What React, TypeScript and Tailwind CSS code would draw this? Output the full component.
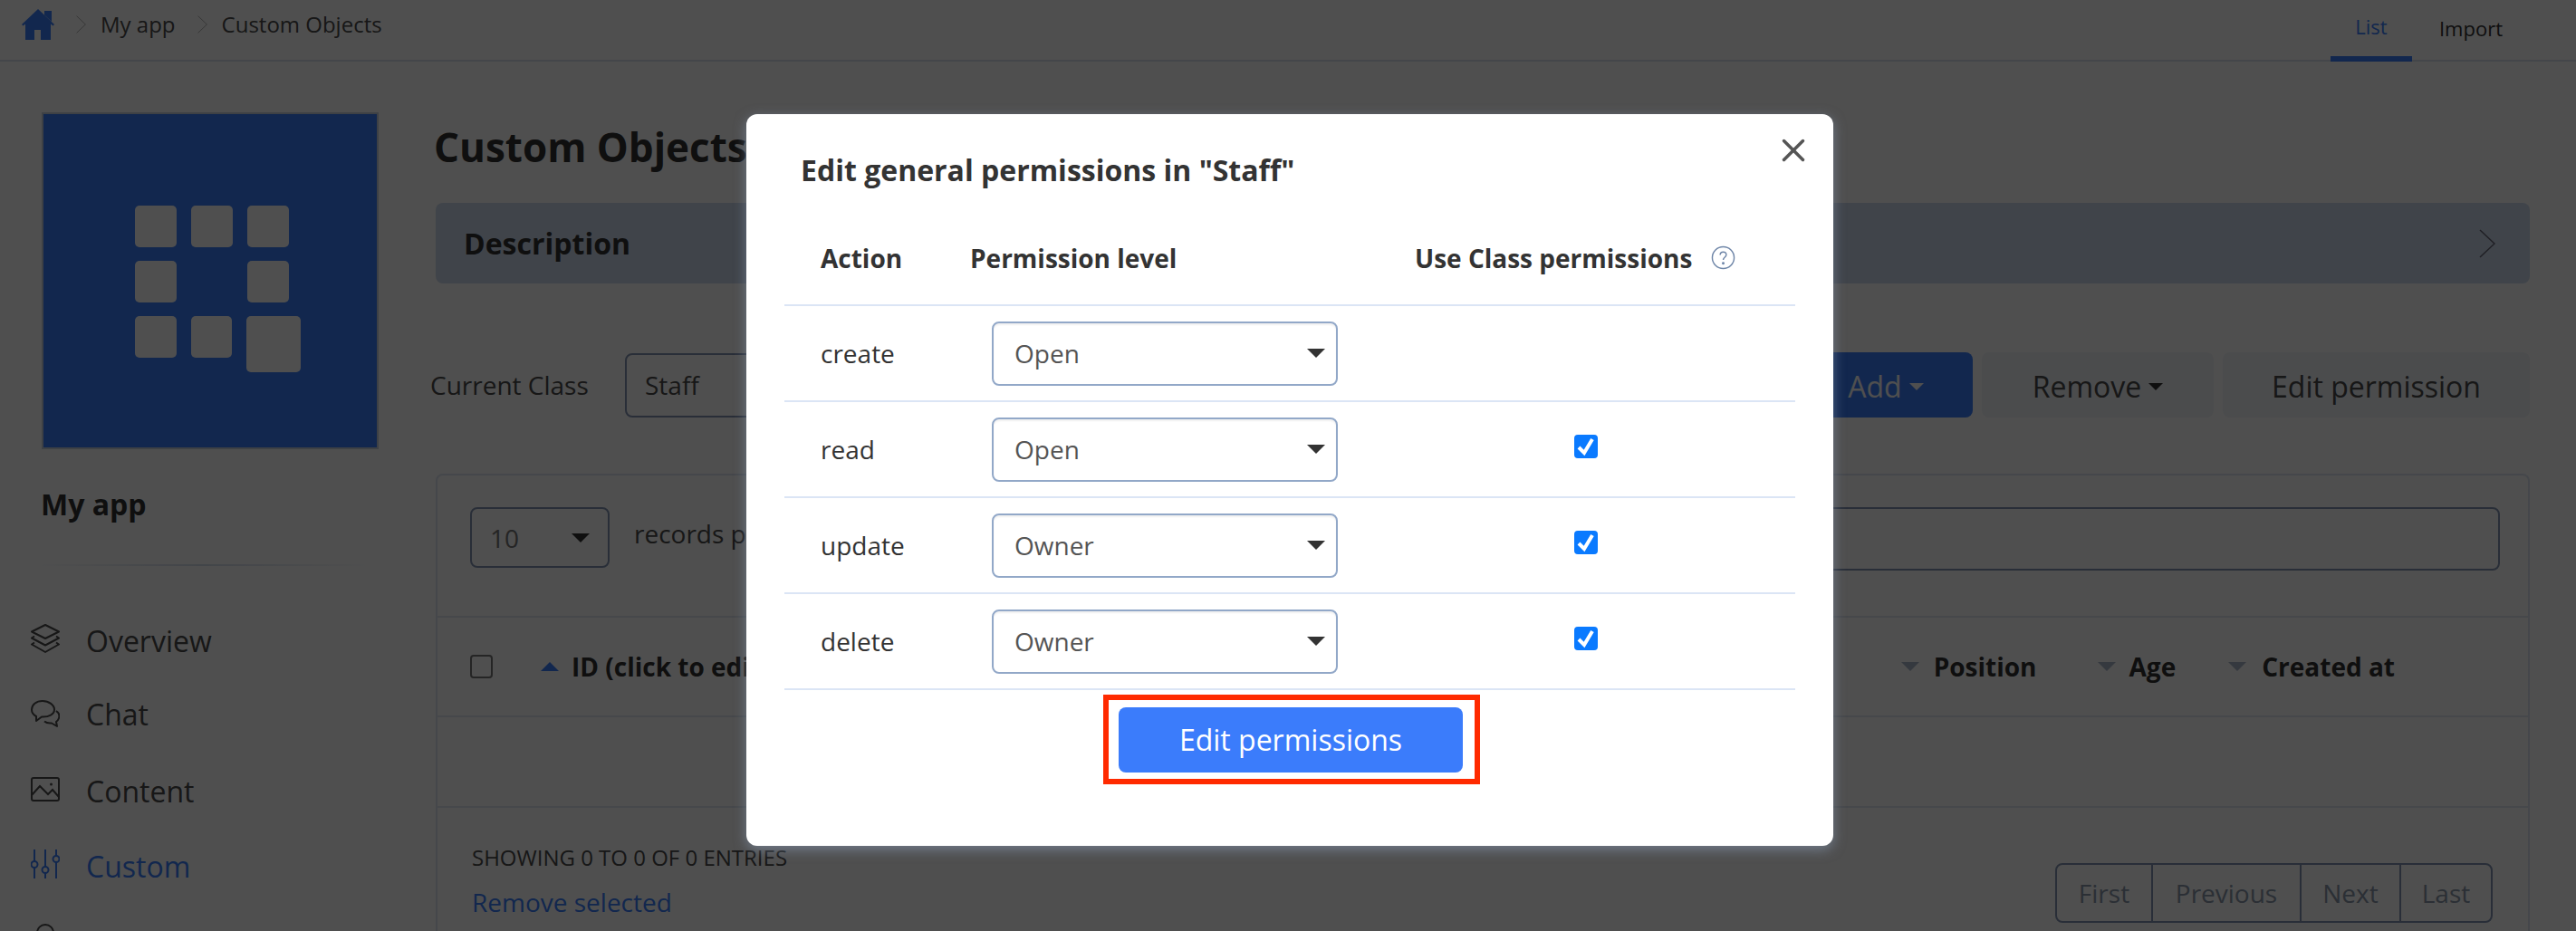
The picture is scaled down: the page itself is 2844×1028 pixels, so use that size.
import { X } from 'lucide-react';

const font = "font-['Open_Sans',sans-serif]";

const Triangle = ({ className, up }: { className: string; up?: boolean }) => (
  <svg viewBox="0 0 20 10" className={className} fill="currentColor">
    <path d={up ? 'M10 0 20 10H0Z' : 'M0 0H20L10 10Z'} />
  </svg>
);

const Chevron = ({ className }: { className: string }) => (
  <svg viewBox="0 0 18 32" preserveAspectRatio="none" className={className} fill="none" stroke="currentColor" strokeWidth="1.5">
    <path d="M1 1 17 16 1 31" />
  </svg>
);

const HomeIcon = () => (
  <svg viewBox="0 0 36 34" className="w-9 h-[34px] text-[#3a7ffb]" fill="currentColor">
    <path d="M18 0 36 17l-1.500 1.500L32 16.500V34H21V23h-7v11H4V16.500L1.500 18.500 0 17 18 0Z" />
    <path d="M25 2h8v12l-8-7.500Z" />
  </svg>
);

const OverviewIcon = () => (
  <svg viewBox="0 0 32 32" className="w-8 h-8 -mt-[6px]" fill="none" stroke="currentColor" strokeWidth="2" strokeLinejoin="round">
    <path d="M16 1 31 8.500 16 16 1 8.500Z" />
    <path d="M4 13.500 1 15.500 16 23.500 31 15.500 28 13.500" />
    <path d="M4 20.500 1 22.500 16 31 31 22.500 28 20.500" />
  </svg>
);

const ChatIcon = () => (
  <svg viewBox="0 0 32 32" className="w-8 h-8" fill="none" stroke="currentColor" strokeWidth="2" strokeLinejoin="round">
    <path d="M13 1C6 1 1 5 1 10.500c0 3.500 2 6 5 7.500v5l6-4.500c8 .5 14-3 14-8S20 1 13 1Z" />
    <path d="M28 12c3 2 4 5 3 8-.5 1.500-1.500 3-3 4l1 5-6-3.500c-3 .3-6-.2-8-2" />
  </svg>
);

const ImageIcon = () => (
  <svg viewBox="0 0 32 32" className="w-8 h-8" fill="none" stroke="currentColor" strokeWidth="2">
    <rect x="1" y="1" width="30" height="25" rx="2" />
    <path d="M1 20 10 10 19 19 24 14 31 22" />
    <circle cx="22.500" cy="8" r="1.500" fill="currentColor" stroke="none" />
  </svg>
);

const SlidersIcon = () => (
  <svg viewBox="0 0 32 32" className="w-8 h-8 -mt-[6px]" fill="none" stroke="currentColor" strokeWidth="2">
    <path d="M4 0V13M4 20V32M16 0V19M16 26V32M28 0V7M28 14V32" />
    <circle cx="4" cy="16.500" r="3.500" />
    <circle cx="16" cy="22.500" r="3.500" />
    <circle cx="28" cy="10.500" r="3.500" />
  </svg>
);

const nav = [
  { label: 'Overview', icon: <OverviewIcon />, className: 'text-[#4a4a4a]' },
  { label: 'Chat', icon: <ChatIcon />, className: 'text-[#4a4a4a] -mt-[2px] mb-[2px]' },
  { label: 'Content', icon: <ImageIcon />, className: 'text-[#4a4a4a]' },
  { label: 'Custom', icon: <SlidersIcon />, className: 'text-[#3a7ffb]' },
];

const perms = [
  { action: 'create', level: 'Open', useClass: false },
  { action: 'read', level: 'Open', useClass: true },
  { action: 'update', level: 'Owner', useClass: true },
  { action: 'delete', level: 'Owner', useClass: true },
];

const pages = [
  { label: 'First', width: 'w-[104px]' },
  { label: 'Previous', width: 'w-[164px]' },
  { label: 'Next', width: 'w-[110px]' },
  { label: 'Last', width: 'w-[101px]' },
];

const Tile = ({ big }: { big?: boolean }) => (
  <div className={`rounded-[5px] bg-white ${big ? 'w-[60px] h-[62px]' : 'w-[46px] h-[46px]'}`} />
);

const Sidebar = () => (
  <aside className="w-[481px] shrink-0 pt-[56px] pl-[46px]">
    <div className="w-[372px] h-[372px] border-2 border-[#c7d0de] bg-[#3a7ffb] flex items-center justify-center">
      <div className="w-[183px] flex flex-col gap-[15px] mt-[18px] ml-[17px]">
        <div className="flex gap-4"><Tile /><Tile /><Tile /></div>
        <div className="flex gap-4"><Tile /><div className="w-[46px]" /><Tile /></div>
        <div className="flex gap-4 h-[62px] items-start"><Tile /><Tile /><Tile big /></div>
      </div>
    </div>
    <div className="mt-[39px] text-[32px] leading-[44px] font-bold text-[#333] -ml-[1px]">My app</div>
    <div className="mt-[44px] -ml-[10px] h-[2px] w-[376px] bg-gradient-to-r from-white via-[#d5deeb] to-white" />
    <nav className="mt-[61px] -ml-[12px] flex flex-col gap-[39px]">
      {nav.map((item) => (
        <div key={item.label} className={`flex items-center gap-[29px] h-[44px] text-[32px] ${item.className}`}>
          {item.icon}
          <span>{item.label}</span>
        </div>
      ))}
      <div className="flex items-center gap-[29px] h-[44px] text-[#4a4a4a]">
        <svg viewBox="0 0 32 32" className="w-8 h-8 -mt-[8px]" fill="none" stroke="currentColor" strokeWidth="2">
          <circle cx="16" cy="10" r="9" />
        </svg>
      </div>
    </nav>
  </aside>
);

const MainContent = () => (
  <main className="w-[2312px] shrink-0 pt-[64px]">
    <h1 className="-ml-[2px] text-[44px] leading-[60px] font-bold text-[#333]">Custom Objects</h1>
    <div className="mt-[32px] h-[89px] rounded-lg bg-[#cedbee] flex items-center justify-between pl-[31px] pr-[38px]">
      <span className="text-[32px] font-bold text-[#333]">Description</span>
      <Chevron className="w-[18px] h-8 text-[#667]" />
    </div>
    <div className="mt-[76px] flex items-center h-[72px]">
      <span className="-ml-[6px] w-[215px] text-[28px] text-[#4a4a4a]">Current Class</span>
      <div className="w-[301px] h-[71px] rounded-lg border-2 border-[#8596b4] flex items-center pl-[20px] text-[28px] text-[#4a4a4a]">Staff</div>
      <div className="ml-auto w-[200px] h-[72px] rounded-lg bg-[#3a7ffb] flex items-center justify-center gap-2 text-[32px] text-white pl-[8px] pt-[3px]">
        Add <Triangle className="w-4 h-2 text-white" />
      </div>
      <div className="ml-[10px] w-[256px] h-[72px] rounded-lg bg-[#f1f4f9] flex items-center justify-center gap-2 text-[32px] text-[#4a4a4a] pt-[3px]">
        Remove <Triangle className="w-4 h-2 text-[#333]" />
      </div>
      <div className="ml-[10px] w-[339px] h-[72px] rounded-lg bg-[#f1f4f9] flex items-center justify-center text-[32px] text-[#4a4a4a] pt-[3px]">Edit permission</div>
    </div>
    <section className="mt-[62px] rounded-t-lg border-2 border-b-0 border-[#dde5f0] h-[600px]">
      <div className="h-[157px] border-b-2 border-[#e2e8f2] flex items-start pt-[35px] pl-[36px] pr-[31px]">
        <div className="w-[154px] h-[67px] rounded-lg border-2 border-[#8596b4] flex items-center justify-between pl-[20px] pr-[20px] text-[28px] text-[#777]">
          10 <Triangle className="w-[20px] h-[10px] text-[#333]" />
        </div>
        {/* cut at the modal edge, the rest of the label sits behind the dialog */}
        <span className="ml-[27px] w-[124px] overflow-hidden whitespace-nowrap text-[28px] text-[#4a4a4a] leading-[58px]">records per page</span>
        <div className="ml-auto w-[1500px] h-[70px] rounded-lg border-2 border-[#8596b4]" />
      </div>
      <div className="h-[110px] border-b-2 border-[#e2e8f2] flex items-center text-[28px] font-bold text-[#333] pl-[36px]">
        <div className="w-[25px] h-[26px] rounded-[4px] border-2 border-[#777]" />
        <Triangle up className="ml-[53px] w-[20px] h-[10px] text-[#3a7ffb]" />
        <span className="ml-[14px] whitespace-nowrap">ID (click to edit)</span>
        <Triangle className="ml-auto w-[20px] h-[10px] text-[#aab8cc]" />
        <span className="ml-[16px]">Position</span>
        <Triangle className="ml-[67px] w-[20px] h-[10px] text-[#aab8cc]" />
        <span className="ml-[15px]">Age</span>
        <Triangle className="ml-[58px] w-[20px] h-[10px] text-[#aab8cc]" />
        <span className="ml-[17px] mr-[147px]">Created at</span>
      </div>
      <div className="h-[100px] border-b-2 border-[#e2e8f2]" />
      <div className="flex items-start justify-between pl-[38px] pr-[39px]">
        <div className="pt-[39px]">
          <div className="text-[24px] leading-[32px] text-[#4a4a4a]">SHOWING 0 TO 0 OF 0 ENTRIES</div>
          <div className="mt-[14px] text-[28px] leading-[38px] text-[#3a7ffb]">Remove selected</div>
        </div>
        <div className="mt-[61px] h-[66px] rounded-lg border-2 border-[#8596b4] flex text-[28px] text-[#8a97aa]">
          {pages.map((p, i) => (
            <div key={p.label} className={`flex items-center justify-center ${p.width} ${i > 0 ? 'border-l-2 border-[#8596b4]' : ''}`}>{p.label}</div>
          ))}
        </div>
      </div>
    </section>
  </main>
);

const PermissionsModal = () => (
  <div className="absolute left-[824px] top-[126px] w-[1200px] h-[808px] rounded-xl bg-white shadow-[0_4px_14px_rgba(150,170,200,0.5)] px-[42px] text-[#333]">
    <X className="absolute right-[23px] top-[19px] w-[42px] h-[42px] text-[#555]" strokeWidth={2} />
    <h2 className="mt-[40px] pl-[18px] text-[32px] leading-[44px] font-bold">Edit general permissions in "Staff"</h2>
    <div className="mt-[23px] h-[105px] flex items-center border-b-2 border-[#dbe5f5] text-[28px] font-bold">
      <span className="pl-[40px] w-[205px]">Action</span>
      <span className="w-[491px]">Permission level</span>
      <span>Use Class permissions</span>
      <svg viewBox="0 0 28 28" className="ml-[21px] w-[27px] h-[27px] text-[#6f86a8]" fill="none" stroke="currentColor" strokeWidth="1.5">
        <circle cx="14" cy="14" r="12.500" />
        <path d="M10.500 11c0-2.200 1.500-3.500 3.500-3.500s3.500 1.300 3.500 3.200c0 2.800-3.500 2.800-3.500 6" />
        <circle cx="14" cy="20.500" r=".8" fill="currentColor" />
      </svg>
    </div>
    {perms.map((p) => (
      <div key={p.action} className="h-[106px] flex items-center border-b-2 border-[#dbe5f5] text-[28px]">
        <span className="pl-[40px] w-[229px]">{p.action}</span>
        <div className="w-[382px] h-[71px] rounded-lg border-2 border-[#92a8c8] flex items-center justify-between pl-[23px] pr-[12px] text-[#555] shadow-[inset_0_2px_2px_rgba(0,0,0,0.06)]">
          {p.level}
          <Triangle className="w-[20px] h-[10px] text-[#333]" />
        </div>
        {p.useClass && (
          <div className="ml-[261px] -mt-[6px] w-[26px] h-[26px] rounded-[4px] bg-[#0a7aff] flex items-center justify-center">
            <svg viewBox="0 0 26 26" className="w-[26px] h-[26px]" fill="none" stroke="white" strokeWidth="4">
              <path d="M5 14 11 20 20 5" />
            </svg>
          </div>
        )}
      </div>
    ))}
    <div className="mt-[5px] flex justify-center">
      <div className="ml-[4px] w-[416px] h-[99px] border-[6px] border-[#ff2a00] flex items-center justify-center">
        <div className="mr-[2px] w-[380px] h-[72px] rounded-lg bg-[#3b7cfb] flex items-center justify-center text-[32px] text-white">Edit permissions</div>
      </div>
    </div>
  </div>
);

export default function App() {
  return (
    <div className={`${font} relative w-[2844px] h-[1028px] overflow-hidden bg-white`}>
      {/* Top bar */}
      <header className="h-[68px] border-b-2 border-[#dbe3ef] flex items-center pl-[24px] pr-[60px] text-[#4a4a4a]">
        <div className="flex items-center pb-[12px] text-[24px]">
          <HomeIcon />
          <Chevron className="ml-[24px] w-[11px] h-[20px] text-[#aaa]" />
          <span className="ml-[16px]">My app</span>
          <Chevron className="ml-[24px] w-[11px] h-[20px] text-[#aaa]" />
          <span className="ml-[16px]">Custom Objects</span>
        </div>
        <div className="ml-auto flex h-full items-start text-[22px]">
          <div className="w-[90px] h-[68px] border-b-[6px] border-[#3a7ffb] text-[#3a7ffb] flex justify-center pt-[13px]">List</div>
          <div className="ml-[30px] pt-[15px] text-[#333]">Import</div>
          <div className="w-[21px]" />
        </div>
      </header>
      <div className="flex">
        <Sidebar />
        <MainContent />
      </div>
      {/* Overlay */}
      <div className="absolute inset-0 bg-black/[0.69]" />
      <PermissionsModal />
    </div>
  );
}
